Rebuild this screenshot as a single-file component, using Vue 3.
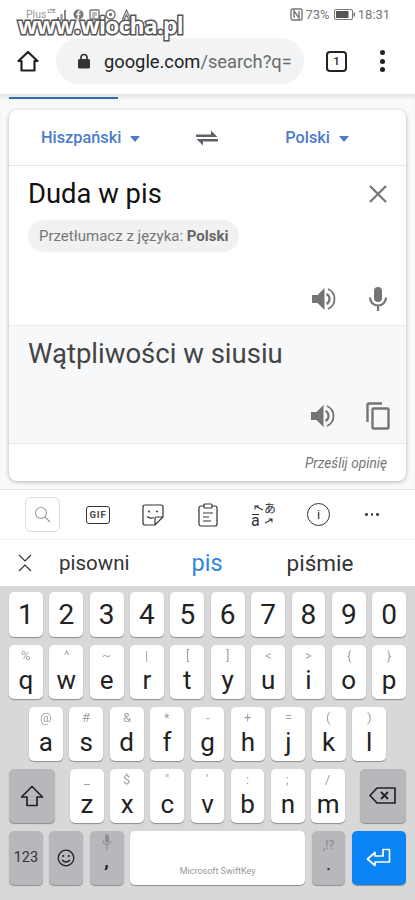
<script setup>
const row1 = ["1", "2", "3", "4", "5", "6", "7", "8", "9", "0"];
const row2 = [["%", "q"], ["^", "w"], ["~", "e"], ["|", "r"], ["[", "t"], ["]", "y"], ["<", "u"], [">", "i"], ["{", "o"], ["}", "p"]];
const row3 = [["@", "a"], ["#", "s"], ["&", "d"], ["*", "f"], ["-", "g"], ["+", "h"], ["=", "j"], ["(", "k"], [")", "l"]];
const row4 = [["_", "z"], ["$", "x"], ['"', "c"], ["'", "v"], [":", "b"], [";", "n"], ["/", "m"]];
</script>

<template>
  <div class="phone">
    <div class="status">
      <div class="status-left">
        <span class="carrier">Plus</span>
        <span class="lte">LTE</span>
        <svg width="12" height="11" viewBox="0 0 12 11"><path d="M1 8h2v3H1zM4.500 5h2v6h-2zM8 1h2v10H8z" fill="#8a8a8a" /></svg>
        <svg width="11" height="11" viewBox="0 0 11 11" class="st-ic"><circle cx="5.500" cy="5.500" r="5" fill="#777" /><path d="M6 10V6h1.500V4.500H6V3.500q0-.7.8-.7h.7V1.500H6.300Q4.500 1.500 4.500 3.400v1.100H3.300V6h1.200v4z" fill="#fff" /></svg>
        <svg width="11" height="11" viewBox="0 0 11 11" class="st-ic"><rect x="1" y="1" width="9" height="9" rx="1" fill="none" stroke="#777" stroke-width="1.400" /><path d="M3 4h5M3 6h5M3 8h3" stroke="#777" /></svg>
        <svg width="11" height="11" viewBox="0 0 11 11" class="st-ic"><circle cx="5.500" cy="5.500" r="4.500" fill="none" stroke="#777" stroke-width="1.500" /><circle cx="5.500" cy="5.500" r="1.700" fill="#777" /></svg>
        <svg width="11" height="11" viewBox="0 0 11 11" class="st-ic"><path d="M5.500 1 9.500 10H7.500L5.500 5.500 3.500 10H1.500z" fill="none" stroke="#777" stroke-width="1.300" /></svg>
      </div>
      <div class="status-right">
        <svg width="13" height="13" viewBox="0 0 13 13"><rect x="1" y="1" width="11" height="11" rx="1.500" fill="none" stroke="#777" stroke-width="1.400" /><path d="M4 10V3l5 7V3" fill="none" stroke="#777" stroke-width="1.400" /></svg>
        <span class="pct">73%</span>
        <svg width="21" height="11" viewBox="0 0 21 11"><rect x=".5" y=".5" width="18" height="10" rx="1.500" fill="none" stroke="#777" /><rect x="2" y="2" width="12.500" height="7" fill="#555" /><rect x="19.500" y="3.500" width="1.500" height="4" fill="#777" /></svg>
        <span class="clock">18:31</span>
      </div>
    </div>
    <div class="watermark">www.wiocha.pl</div>

    <div class="toolbar">
      <svg class="home" width="24" height="24" viewBox="0 0 24 24"><path d="M12 3 2.500 12H5.500V21.500H18.500V12H21.500z" fill="none" stroke="#222" stroke-width="2.200" stroke-linejoin="round" /></svg>
      <div class="urlbar">
        <svg width="14" height="16" viewBox="0 0 14 16"><path d="M4 7V4.500a3 3 0 0 1 6 0V7" fill="none" stroke="#333" stroke-width="1.700" /><rect x="1" y="6" width="12" height="9.500" rx="1.500" fill="#333" /></svg>
        <span class="url"><b>google.com</b>/search?q=</span>
      </div>
      <div class="tabs">1</div>
      <div class="dots"><i></i><i></i><i></i></div>
    </div>

    <div class="page">
      <div class="tab-line"></div>
      <div class="card">
        <div class="lang-row">
          <div class="lang lang-a">Hiszpański<span class="caret"></span></div>
          <svg class="swap" width="24" height="18" viewBox="0 0 24 18"><path d="M1 5.500H16V1.500L22.500 8H1zM23 10H1.500L8 16.500V12.500H23z" fill="#5f6368" /></svg>
          <div class="lang lang-b">Polski<span class="caret"></span></div>
        </div>
        <div class="input-box">
          <div class="source-row">
            <div class="source">Duda w pis</div>
            <svg width="20" height="20" viewBox="0 0 20 20"><path d="M2 2 18 18M18 2 2 18" stroke="#757575" stroke-width="2.200" /></svg>
          </div>
          <div class="chip">Przetłumacz z języka: <b>Polski</b></div>
          <div class="actions">
            <svg width="25" height="24" viewBox="0 0 25 24"><path d="M1 8V16H6.500L13.500 23V1L6.500 8z" fill="#757575" /><path d="M15.500 7q3 1.500 3 5t-3 5" fill="none" stroke="#757575" stroke-width="2.200" /><path d="M17 2q6.500 3 6.500 10T17 22" fill="none" stroke="#757575" stroke-width="1.800" /></svg>
            <svg width="20" height="25" viewBox="0 0 20 25"><rect x="6" y="1" width="8" height="15" rx="4" fill="#757575" /><path d="M2 11.500a8 8 0 0 0 16 0M10 19.500V25" fill="none" stroke="#757575" stroke-width="2.200" /></svg>
          </div>
        </div>
        <div class="output-box">
          <div class="target">Wątpliwości w siusiu</div>
          <div class="actions out-actions">
            <svg width="25" height="24" viewBox="0 0 25 24"><path d="M1 8V16H6.500L13.500 23V1L6.500 8z" fill="#757575" /><path d="M15.500 7q3 1.500 3 5t-3 5" fill="none" stroke="#757575" stroke-width="2.200" /><path d="M17 2q6.500 3 6.500 10T17 22" fill="none" stroke="#757575" stroke-width="1.800" /></svg>
            <svg width="24" height="28" viewBox="0 0 24 28"><path d="M16 1.500H3Q1.500 1.500 1.500 3V20" fill="none" stroke="#757575" stroke-width="2.400" /><rect x="6.500" y="6.500" width="16" height="20" rx="1" fill="none" stroke="#757575" stroke-width="2.400" /></svg>
          </div>
        </div>
        <div class="feedback">Prześlij opinię</div>
      </div>
    </div>

    <div class="kb-tools">
      <div class="search-box">
        <svg width="17" height="17" viewBox="0 0 17 17"><circle cx="7" cy="7" r="5.500" fill="none" stroke="#9a9a9a" stroke-width="1.100" /><path d="M11 11 16 16" stroke="#9a9a9a" stroke-width="1.100" /></svg>
      </div>
      <div class="gif">GIF</div>
      <svg width="22" height="22" viewBox="0 0 22 22"><path d="M3 1H19Q21 1 21 3V13L13 21H3Q1 21 1 19V3Q1 1 3 1ZM21 13H15Q13 13 13 15V21" fill="none" stroke="#333" stroke-width="1.200" /><path d="M5 12.500Q8 15 12 13.500" fill="none" stroke="#333" stroke-width="1.200" /><circle cx="7" cy="7.500" r="1" fill="#333" /><circle cx="15" cy="7.500" r="1" fill="#333" /></svg>
      <svg width="20" height="24" viewBox="0 0 20 24"><rect x="1" y="3" width="18" height="20" rx="2" fill="none" stroke="#333" stroke-width="1.200" /><rect x="6" y="1" width="8" height="4" rx="1" fill="#fff" stroke="#333" stroke-width="1.200" /><path d="M5 10H15M5 14H11M5 18H13" stroke="#333" stroke-width="1.200" /></svg>
      <div class="translate">
        <span class="t-ja">あ</span>
        <span class="t-a">a</span>
        <svg class="t-arrows" width="24" height="22" viewBox="0 0 24 22"><path d="M12 6 4 2M4 5.500V2H8M1 10.500H8M14 19 21 15.500M17.500 15H21V18.500" fill="none" stroke="#333" stroke-width="1.100" /></svg>
      </div>
      <div class="info">i</div>
      <div class="more"><i></i><i></i><i></i></div>
    </div>

    <div class="suggest">
      <svg width="14" height="18" viewBox="0 0 14 18"><path d="M1 1 7 7 13 1M1 17 7 11 13 17" fill="none" stroke="#333" stroke-width="1.200" /></svg>
      <span class="s-1">pisowni</span>
      <span class="s-2">pis</span>
      <span class="s-3">piśmie</span>
    </div>

    <div class="keyboard">
      <div class="kb-row">
        <div v-for="k in row1" :key="k" class="key num">{{ k }}</div>
      </div>
      <div class="kb-row tall">
        <div v-for="k in row2" :key="k[1]" class="key letter"><small>{{ k[0] }}</small>{{ k[1] }}</div>
      </div>
      <div class="kb-row tall row-3">
        <div v-for="k in row3" :key="k[1]" class="key letter"><small>{{ k[0] }}</small>{{ k[1] }}</div>
      </div>
      <div class="kb-row tall">
        <div class="key grey wide">
          <svg width="24" height="22" viewBox="0 0 24 22"><path d="M12 1.500 1.500 12H7V20.500H17V12H22.500z" fill="none" stroke="#222" stroke-width="1.700" stroke-linejoin="round" /></svg>
        </div>
        <div class="spacer"></div>
        <div v-for="k in row4" :key="k[1]" class="key letter"><small>{{ k[0] }}</small>{{ k[1] }}</div>
        <div class="spacer"></div>
        <div class="key grey wide">
          <svg width="27" height="17" viewBox="0 0 27 17"><path d="M8 1H26V16H8L1 8.500z" fill="none" stroke="#222" stroke-width="1.700" stroke-linejoin="round" /><path d="M12 5 19 12M19 5 12 12" stroke="#222" stroke-width="1.800" /></svg>
        </div>
      </div>
      <div class="kb-row tall">
        <div class="key grey sym">123</div>
        <div class="key grey">
          <svg width="18" height="18" viewBox="0 0 18 18"><circle cx="9" cy="9" r="7.800" fill="none" stroke="#222" stroke-width="1.300" /><circle cx="6.200" cy="7" r="1.100" fill="#222" /><circle cx="11.800" cy="7" r="1.100" fill="#222" /><path d="M5 11Q9 15 13 11" fill="none" stroke="#222" stroke-width="1.300" /></svg>
        </div>
        <div class="key grey comma">
          <svg width="10" height="16" viewBox="0 0 10 16"><rect x="3" y="0" width="4" height="9" rx="2" fill="#8e8e8e" /><path d="M1 6.500a4 4 0 0 0 8 0M5 11V16" fill="none" stroke="#8e8e8e" stroke-width="1.100" /></svg>
          <span>,</span>
        </div>
        <div class="key space">Microsoft SwiftKey</div>
        <div class="key grey period"><small>,!?</small><span>.</span></div>
        <div class="key enter">
          <svg width="25" height="19" viewBox="0 0 25 19"><path d="M1.500 11 9 4.500V8H17V1.500H23.500V14H9V17.500z" fill="none" stroke="#fff" stroke-width="1.700" stroke-linejoin="round" /></svg>
        </div>
      </div>
    </div>
  </div>
</template>

<style>
body {
  background: #fff;
}
</style>

<style scoped>
.phone {
  position: relative;
  width: 415px;
  height: 900px;
  overflow: hidden;
  background: #fff;
  font-family: Roboto, "Liberation Sans", sans-serif;
}
.status {
  height: 29px;
  box-sizing: border-box;
  padding: 7px 25px 0 26px;
  display: flex;
  justify-content: space-between;
  color: #777;
  font-size: 12px;
}
.status-left,
.status-right {
  display: flex;
  align-items: center;
  height: 15px;
}
.status-right {
  font-size: 13px;
}
.carrier {
  font-size: 10.500px;
  color: #999;
}
.lte {
  font-size: 5px;
  margin: -8px 1px 0 1px;
  color: #555;
}
.st-ic {
  margin-left: 5px;
}
.pct {
  margin: 0 4px 0 2px;
}
.clock {
  margin-left: 3px;
}
.watermark {
  position: absolute;
  left: 18px;
  top: 10px;
  font: 700 22.500px/32px "Open Sans", sans-serif;
  letter-spacing: -.5px;
  color: #fff;
  -webkit-text-stroke: 3px #555;
  paint-order: stroke fill;
}
.toolbar {
  height: 65px;
  display: flex;
  align-items: center;
  box-sizing: border-box;
  padding: 0 0 1px 16px;
}
.home {
  flex: none;
}
.urlbar {
  margin-left: 16px;
  width: 248px;
  height: 46px;
  border-radius: 23px;
  background: #f1f3f4;
  display: flex;
  align-items: center;
  box-sizing: border-box;
  padding-left: 21px;
  overflow: hidden;
}
.url {
  margin-left: 13px;
  font-size: 18.300px;
  color: #6b6b6b;
  white-space: nowrap;
}
.url b {
  font-weight: 400;
  color: #222;
}
.tabs {
  margin-left: 22px;
  width: 21px;
  height: 21px;
  box-sizing: border-box;
  border: 2px solid #222;
  border-radius: 4px;
  font-size: 11.500px;
  font-weight: 500;
  line-height: 17px;
  text-align: center;
  color: #222;
}
.dots {
  margin-left: 33px;
  display: flex;
  flex-direction: column;
  gap: 3.500px;
}
.dots i {
  width: 5px;
  height: 5px;
  border-radius: 50%;
  background: #222;
}
.page {
  height: 396px;
  box-sizing: border-box;
  background: #f9f9f9;
  border-top: 1px solid #e4e4e4;
  box-shadow: inset 0 4px 4px -2px #e2e2e2;
  border-bottom: 1px solid #e8e8e8;
  padding: 2px 9px 0;
}
.tab-line {
  width: 109px;
  height: 2px;
  background: #2e6bb5;
}
.card {
  margin-top: 11px;
  height: 371px;
  background: #fff;
  border-radius: 8px;
  box-shadow: 0 1px 4px rgba(0, 0, 0, .28);
  display: flex;
  flex-direction: column;
  overflow: hidden;
}
.lang-row {
  height: 56px;
  flex: none;
  box-sizing: border-box;
  border-bottom: 1px solid #e6e6e6;
  display: flex;
  align-items: center;
  padding-left: 32px;
}
.lang {
  font-size: 16.300px;
  font-weight: 500;
  color: #4a7cc9;
  display: flex;
  align-items: center;
  white-space: nowrap;
}
.lang-b {
  margin-left: 66px;
}
.swap {
  margin-left: 55px;
}
.caret {
  margin: 3px 0 0 9px;
  border-left: 5.500px solid transparent;
  border-right: 5.500px solid transparent;
  border-top: 6px solid #4a7cc9;
}
.input-box {
  height: 159px;
  flex: none;
  box-sizing: border-box;
  padding: 9px 18px 0 19px;
  display: flex;
  flex-direction: column;
}
.source-row {
  display: flex;
  align-items: center;
  justify-content: space-between;
  height: 38px;
  padding-right: 0;
}
.source {
  font-size: 27.400px;
  color: #111;
}
.chip {
  margin-top: 7px;
  align-self: flex-start;
  height: 32px;
  border-radius: 16px;
  background: #f1f1f1;
  padding: 0 11px;
  font-size: 15px;
  line-height: 32px;
  color: #777;
  white-space: nowrap;
}
.chip b {
  font-weight: 700;
  color: #666;
}
.actions {
  margin-top: auto;
  display: flex;
  justify-content: flex-end;
  align-items: center;
  gap: 32px;
  padding: 0 0 14px;
}
.output-box {
  height: 119px;
  flex: none;
  box-sizing: border-box;
  background: #f7f8fa;
  border-top: 1px solid #e8e8e8;
  border-bottom: 1px solid #e8e8e8;
  padding: 9px 16px 0 19px;
  display: flex;
  flex-direction: column;
}
.target {
  font-size: 27.500px;
  line-height: 38px;
  color: #444;
}
.out-actions {
  gap: 31px;
  padding-bottom: 13px;
}
.feedback {
  flex: 1;
  font-size: 13.700px;
  font-style: italic;
  color: #777;
  text-align: right;
  padding: 11px 19px 0 0;
}
.kb-tools {
  height: 50px;
  box-sizing: border-box;
  position: relative;
  display: flex;
  align-items: center;
  padding-left: 25px;
  gap: 0;
  border-bottom: 1px solid #f4f4f4;
}
.search-box {
  width: 35px;
  height: 35px;
  box-sizing: border-box;
  border: 1px solid #ddd;
  border-radius: 6px;
  display: flex;
  align-items: center;
  justify-content: center;
}
.gif {
  margin-left: 26px;
  width: 24px;
  height: 18px;
  box-sizing: border-box;
  border: 1.200px solid #333;
  border-radius: 3px;
  font-size: 9.500px;
  font-weight: 700;
  letter-spacing: .8px;
  text-align: center;
  line-height: 16px;
  color: #444;
}
.kb-tools > svg:nth-of-type(1) {
  margin-left: 32px;
}
.kb-tools > svg:nth-of-type(2) {
  margin-left: 34px;
}
.translate {
  position: relative;
  margin-left: 33px;
  width: 26px;
  height: 24px;
}
.t-ja {
  position: absolute;
  right: 1px;
  top: -4px;
  font: 12px "Noto Sans CJK JP", sans-serif;
  color: #333;
}
.t-a {
  position: absolute;
  left: 0;
  bottom: -2px;
  font-size: 16px;
  line-height: 16px;
  color: #333;
}
.t-arrows {
  position: absolute;
  left: 0;
  top: 1px;
}
.info {
  margin-left: 30px;
  width: 23px;
  height: 23px;
  box-sizing: border-box;
  border: 1.200px solid #333;
  border-radius: 50%;
  text-align: center;
  font-size: 13px;
  line-height: 21px;
  color: #333;
}
.more {
  margin-left: 35px;
  display: flex;
  gap: 3px;
}
.more i {
  width: 2.500px;
  height: 2.500px;
  border-radius: 50%;
  background: #444;
}
.suggest {
  height: 46px;
  display: flex;
  align-items: center;
  box-sizing: border-box;
  padding-left: 18px;
  font-size: 20.500px;
  color: #333;
  position: relative;
}
.s-1 {
  margin-left: 27px;
}
.s-2 {
  margin-left: 62px;
  font-size: 23.500px;
  color: #2b8ad8;
}
.s-3 {
  margin-left: 64px;
  font-size: 22.500px;
}
.keyboard {
  height: 314px;
  background: #d8d8d8;
  box-sizing: border-box;
  padding: 6px 9px 0;
  display: flex;
  flex-direction: column;
  gap: 7.500px;
}
.kb-row {
  height: 45px;
  display: flex;
  gap: 6.550px;
}
.kb-row.tall {
  height: 54.500px;
}
.row-3 {
  padding: 0 20px;
}
.key {
  flex: 1 1 0;
  min-width: 0;
  background: #fff;
  border-radius: 5px;
  box-shadow: 0 1px 1px rgba(0, 0, 0, .35);
  color: #222;
  display: flex;
  align-items: center;
  justify-content: center;
  position: relative;
}
.num {
  font-size: 28px;
}
.letter {
  flex-direction: column;
  justify-content: flex-start;
  font-size: 26px;
  line-height: 28px;
  padding-top: 1px;
}
.letter small {
  font-size: 13px;
  line-height: 20px;
  color: #444;
  opacity: .5;
  will-change: transform;
}
.spacer {
  flex: 0 0 2px;
}
.grey {
  background: #b6b8bc;
}
.wide {
  flex: 0 0 46px;
}
.sym {
  font-size: 14.500px;
  color: #333;
}
.comma {
  flex-direction: column;
  padding-top: 3px;
  justify-content: flex-start;
  font-size: 17px;
  font-weight: 900;
  line-height: 22px;
  box-sizing: border-box;
}
.space {
  flex: 0 0 175px;
  align-items: flex-end;
  padding-bottom: 9px;
  box-sizing: border-box;
  font-size: 9px;
  color: #999;
}
.period {
  flex-direction: column;
  justify-content: flex-start;
  padding-top: 6px;
  box-sizing: border-box;
  font-size: 19px;
  line-height: 21px;
}
.period small {
  font-size: 12px;
  line-height: 16px;
  color: #888;
}
.enter {
  flex: 0 0 54px;
  background: #0a84f5;
}
</style>
